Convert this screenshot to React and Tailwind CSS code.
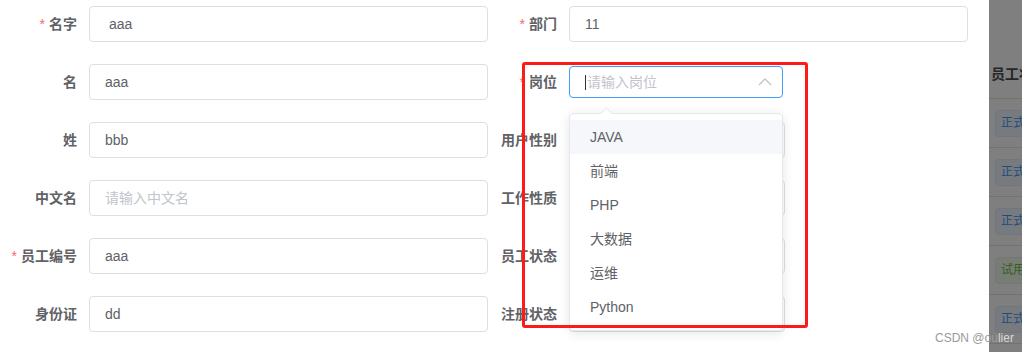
import React from "react";

const font = { fontFamily: '"Liberation Sans", "Noto Sans CJK SC", sans-serif' };

function Label({ text, required, w }) {
  return (
    <div className={`${w} shrink-0 pr-3 text-right text-[14px] font-bold text-[#606266] leading-[36px]`}>
      {required && <span className="text-[#f56c6c] mr-1 font-normal">*</span>}
      {text}
    </div>
  );
}

function Input({ value, placeholder, w = "w-[399px]" }) {
  return (
    <div className={`${w} h-[36px] shrink-0 border border-[#dcdfe6] rounded-[4px] px-[15px] flex items-center text-[14px] bg-white`}>
      {value ? (
        <span className="text-[#606266] whitespace-pre">{value}</span>
      ) : (
        <span className="text-[#c0c4cc]">{placeholder}</span>
      )}
    </div>
  );
}

function Chevron({ up }) {
  return (
    <svg width="14" height="8" viewBox="0 0 14 8" className="shrink-0">
      <polyline
        points={up ? "1,7 7,1 13,7" : "1,1 7,7 13,1"}
        fill="none"
        stroke="#c0c4cc"
        strokeWidth="1.3"
      />
    </svg>
  );
}

function SelectBox() {
  return (
    <div className="w-[216px] h-[36px] shrink-0 border border-[#dcdfe6] rounded-[4px] px-[15px] flex items-center justify-end bg-white">
      <Chevron />
    </div>
  );
}

function FocusSelect() {
  return (
    <div className="w-[214px] h-[32px] shrink-0 border border-[#409eff] rounded-[4px] pl-[15px] pr-[10px] flex items-center justify-between text-[14px] bg-white">
      <div className="flex items-center">
        <span className="w-px h-[15px] bg-[#303133] mr-[1px]" />
        <span className="text-[#c0c4cc]">请输入岗位</span>
      </div>
      <Chevron up />
    </div>
  );
}

const rows = [
  { l: { t: "名字", r: true, v: " aaa" }, r: { t: "部门", r: true, kind: "input", v: "11" } },
  { l: { t: "名", v: "aaa" }, r: { t: "岗位", r: true, kind: "focus" } },
  { l: { t: "姓", v: "bbb" }, r: { t: "用户性别", kind: "select" } },
  { l: { t: "中文名", p: "请输入中文名" }, r: { t: "工作性质", kind: "select" } },
  { l: { t: "员工编号", r: true, v: "aaa" }, r: { t: "员工状态", kind: "select" } },
  { l: { t: "身份证", v: "dd" }, r: { t: "注册状态", kind: "select" } },
];

const tableRows = [
  { t: "正式", c: "blue" },
  { t: "正式", c: "blue" },
  { t: "正式", c: "blue" },
  { t: "试用", c: "green" },
  { t: "正式", c: "blue" },
  { t: "", c: "" },
];

export default function App() {
  return (
    <div className="relative w-[1022px] h-[352px] bg-white overflow-hidden flex" style={font}>
      {/* dialog form */}
      <div className="w-[989px] shrink-0 bg-white pt-[6px] flex flex-col gap-[22px]">
        {rows.map((row, i) => (
          <div key={i} className="flex h-[36px]">
            <div className="w-[488px] shrink-0 flex items-center">
              <Label text={row.l.t} required={row.l.r} w="w-[89px]" />
              <Input value={row.l.v} placeholder={row.l.p} />
            </div>
            <div className="flex items-center">
              <Label text={row.r.t} required={row.r.r} w="w-[81px]" />
              {row.r.kind === "input" && <Input value={row.r.v} />}
              {row.r.kind === "select" && <SelectBox />}
              {row.r.kind === "focus" && <FocusSelect />}
            </div>
          </div>
        ))}
      </div>

      {/* masked table behind */}
      <div className="flex-1 h-[352px] bg-[#7f7f7f] flex flex-col overflow-hidden">
        <div className="h-[99px] shrink-0 flex items-end pb-[13px] pl-[2px] border-b border-[#727272]">
          <span className="text-[14px] font-bold text-[#262626] whitespace-nowrap">员工状态</span>
        </div>
        {tableRows.map((r, i) => (
          <div key={i} className="h-[49px] shrink-0 border-b border-[#727272] flex items-center pl-[6px]">
            {r.c === "blue" && (
              <div className="h-[27px] px-[5px] flex items-center rounded-[4px] border border-[#6e7780] bg-[#777b80] text-[12px] text-[#1f4c7a] whitespace-nowrap">
                {r.t}
              </div>
            )}
            {r.c === "green" && (
              <div className="h-[27px] px-[5px] flex items-center rounded-[4px] border border-[#717a6d] bg-[#787c76] text-[12px] text-[#315e1c] whitespace-nowrap">
                {r.t}
              </div>
            )}
          </div>
        ))}
      </div>

      {/* dropdown */}
      <div className="absolute left-[569px] top-[113px] w-[214px] bg-white border border-[#e4e7ed] rounded-[4px] py-[6px] shadow-[0_2px_12px_0_rgba(0,0,0,0.1)]">
        <div className="absolute -top-[5px] left-[32px] w-[9px] h-[9px] bg-white border-l border-t border-[#e4e7ed] rotate-45" />
        {["JAVA", "前端", "PHP", "大数据", "运维", "Python"].map((t, i) => (
          <div
            key={t}
            className={`relative h-[34px] leading-[34px] px-5 text-[14px] text-[#606266] ${i === 0 ? "bg-[#f5f7fa]" : ""}`}
          >
            {t}
          </div>
        ))}
      </div>

      {/* red annotation */}
      <div className="absolute left-[522px] top-[62px] w-[286px] h-[266px] border-[3px] border-[#ff1a1a] rounded-[3px]" />

      {/* watermark */}
      <div className="absolute left-[935px] top-[331px] text-[12px] leading-[14px] whitespace-nowrap">
        <span className="text-[#9a9a9a]">CSDN @ou</span>
        <span className="text-[#d8d8d8]">lier</span>
      </div>
    </div>
  );
}
